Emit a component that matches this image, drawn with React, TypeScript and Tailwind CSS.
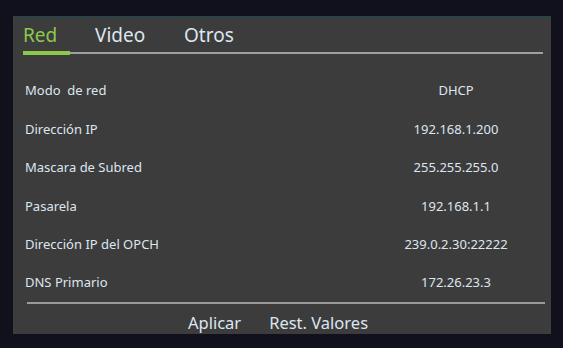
import React from "react";

const rows: [string, string][] = [
  ["Modo  de red", "DHCP"],
  ["Dirección IP", "192.168.1.200"],
  ["Mascara de Subred", "255.255.255.0"],
  ["Pasarela", "192.168.1.1"],
  ["Dirección IP del OPCH", "239.0.2.30:22222"],
  ["DNS Primario", "172.26.23.3"],
];

export default function App() {
  return (
    <div
      className="w-[563px] h-[348px] overflow-hidden bg-[#10111c] pt-[16px] pl-[13px]"
      style={{ fontFamily: '"Noto Sans", "Open Sans", sans-serif' }}
    >
      <div className="w-[538px] h-[318px] overflow-hidden bg-[#3c3c3c] border-t border-[#1d4a55] flex flex-col text-[#dde6f0]">
        {/* Tabs */}
        <div className="shrink-0 pl-[10px] pr-[8px] pt-[3px]">
          <div className="flex items-end h-[25px] text-[19px] leading-none">
            <div className="w-[47px] text-[#8cc84b]">Red</div>
            <div className="w-[90px] pl-[25px]">Video</div>
            <div className="pl-[24px]">Otros</div>
          </div>
          <div className="flex items-center mt-[6px] h-[4px]">
            <div className="w-[47px] h-[4px] bg-[#8cc84b]" />
            <div className="flex-1 h-[2px] bg-[#a0a0a0]" />
          </div>
        </div>

        {/* Rows */}
        <div className="shrink-0 flex flex-col pl-[12px] pr-[9px] mt-[17px]">
          {rows.map(([label, value]) => (
            <div key={label} className="h-[38.4px] flex items-center text-[13px] whitespace-pre">
              <div className="flex-1">{label}</div>
              <div className="w-[172px] text-center">{value}</div>
            </div>
          ))}
        </div>

        {/* Footer */}
        <div className="shrink-0 ml-[14px] mr-[6px] h-[2px] bg-[#9a9a9a]" />
        <div className="shrink-0 flex justify-center gap-[28px] text-[16.5px] leading-[22px] pr-[8px] pt-[8px]">
          <span>Aplicar</span>
          <span>Rest. Valores</span>
        </div>
      </div>
    </div>
  );
}
